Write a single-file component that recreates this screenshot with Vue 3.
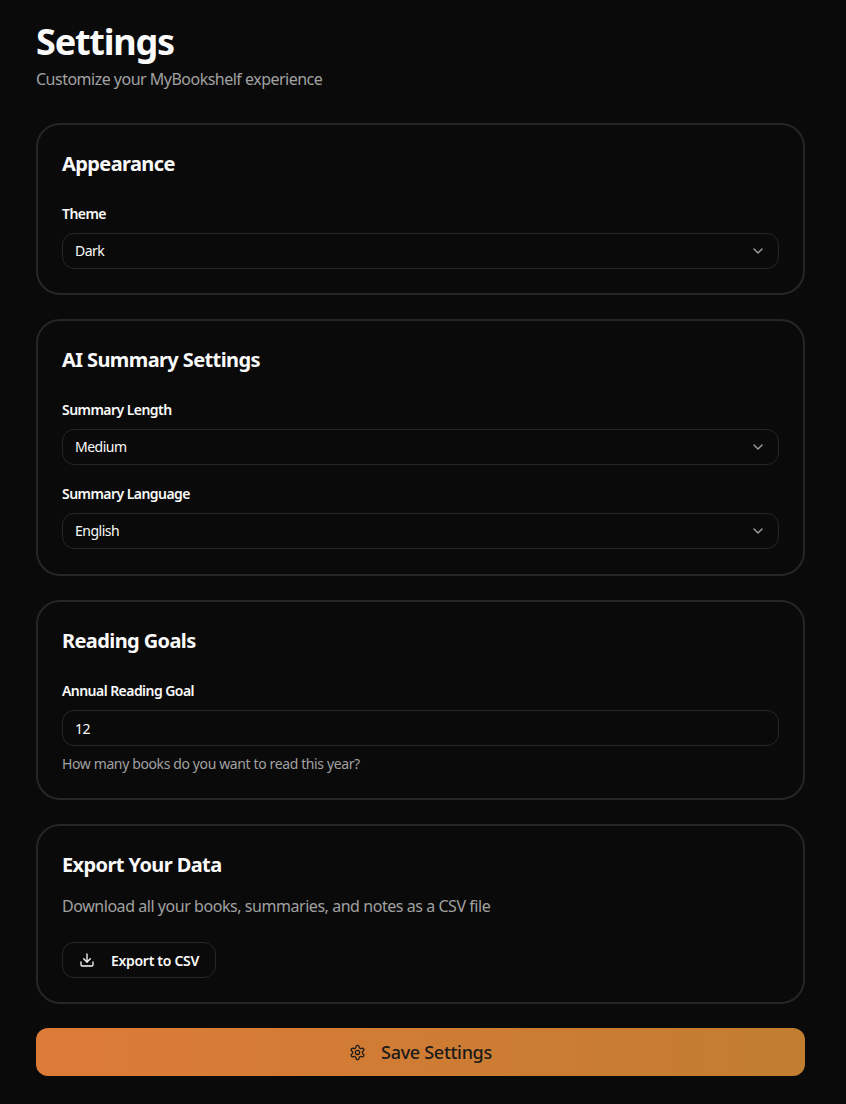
<script setup>
</script>

<template>
  <main class="page">
    <header class="head">
      <h1>Settings</h1>
      <p>Customize your MyBookshelf experience</p>
    </header>

    <section class="card">
      <h2>Appearance</h2>
      <div class="fields">
        <div class="field">
          <label>Theme</label>
          <div class="control select"><span>Dark</span>
            <svg class="chev" viewBox="0 0 24 24"><path d="m6 9 6 6 6-6" /></svg>
          </div>
        </div>
      </div>
    </section>

    <section class="card card-pair">
      <h2>AI Summary Settings</h2>
      <div class="fields">
        <div class="field">
          <label>Summary Length</label>
          <div class="control select"><span>Medium</span>
            <svg class="chev" viewBox="0 0 24 24"><path d="m6 9 6 6 6-6" /></svg>
          </div>
        </div>
        <div class="field">
          <label>Summary Language</label>
          <div class="control select"><span>English</span>
            <svg class="chev" viewBox="0 0 24 24"><path d="m6 9 6 6 6-6" /></svg>
          </div>
        </div>
      </div>
    </section>

    <section class="card">
      <h2>Reading Goals</h2>
      <div class="fields">
        <div class="field">
          <label>Annual Reading Goal</label>
          <div class="control"><span>12</span></div>
          <p class="hint">How many books do you want to read this year?</p>
        </div>
      </div>
    </section>

    <section class="card">
      <h2>Export Your Data</h2>
      <p class="desc">Download all your books, summaries, and notes as a CSV file</p>
      <button class="export">
        <svg viewBox="0 0 24 24"><path d="M12 15V3" /><path d="M21 15v4a2 2 0 0 1-2 2H5a2 2 0 0 1-2-2v-4" /><path d="m7 10 5 5 5-5" /></svg>
        <span>Export to CSV</span>
      </button>
    </section>

    <button class="save">
      <svg viewBox="0 0 24 24">
        <path d="M12.22 2h-.44a2 2 0 0 0-2 2v.18a2 2 0 0 1-1 1.73l-.43.25a2 2 0 0 1-2 0l-.15-.08a2 2 0 0 0-2.73.73l-.22.38a2 2 0 0 0 .73 2.73l.15.1a2 2 0 0 1 1 1.72v.51a2 2 0 0 1-1 1.74l-.15.09a2 2 0 0 0-.73 2.73l.22.38a2 2 0 0 0 2.73.73l.15-.08a2 2 0 0 1 2 0l.43.25a2 2 0 0 1 1 1.73V20a2 2 0 0 0 2 2h.44a2 2 0 0 0 2-2v-.18a2 2 0 0 1 1-1.73l.43-.25a2 2 0 0 1 2 0l.15.08a2 2 0 0 0 2.73-.73l.22-.39a2 2 0 0 0-.73-2.73l-.15-.08a2 2 0 0 1-1-1.74v-.5a2 2 0 0 1 1-1.74l.15-.09a2 2 0 0 0 .73-2.73l-.22-.38a2 2 0 0 0-2.73-.73l-.15.08a2 2 0 0 1-2 0l-.43-.25a2 2 0 0 1-1-1.73V4a2 2 0 0 0-2-2z" />
        <circle cx="12" cy="12" r="3" />
      </svg>
      <span>Save Settings</span>
    </button>
  </main>
</template>

<style>
html, body { margin: 0; background: #0a0a0a; }
</style>

<style scoped>
.page {
  box-sizing: border-box;
  width: 846px;
  height: 1104px;
  padding: 22px 41px 0 36px;
  background: #0a0a0a;
  font-family: "Noto Sans", "Open Sans", sans-serif;
  color: #fafafa;
  display: flex;
  flex-direction: column;
  gap: 24px;
  overflow: hidden;
}
.head { height: 77px; }
h1 {
  margin: 0;
  font-size: 36px;
  line-height: 40px;
  font-weight: 700;
  letter-spacing: -1.2px;
}
.head p {
  margin: 5px 0 0;
  font-size: 16px;
  line-height: 24px;
  color: #a1a1a1;
  letter-spacing: -0.51px;
}
.card {
  box-sizing: border-box;
  border: 2px solid #262626;
  border-radius: 24px;
  padding: 24px;
  background: #0a0a0a;
}
.card-pair { padding-bottom: 25px; }
h2 {
  margin: 0;
  font-size: 20px;
  line-height: 30px;
  font-weight: 700;
  letter-spacing: -0.6px;
}
.fields { margin-top: 24px; display: flex; flex-direction: column; gap: 18px; }
.field { display: flex; flex-direction: column; gap: 8px; }
label {
  font-size: 14px;
  line-height: 22px;
  font-weight: 600;
  letter-spacing: -0.55px;
}
.control {
  box-sizing: border-box;
  height: 36px;
  border: 1px solid #262626;
  border-radius: 12px;
  padding: 0 12px;
  display: flex;
  align-items: center;
  justify-content: space-between;
  font-size: 14px;
  letter-spacing: -0.5px;
}
.select span { padding-bottom: 2px; }
.chev {
  width: 16px;
  height: 16px;
  fill: none;
  stroke: #a1a1a1;
  stroke-width: 2;
  stroke-linecap: round;
  stroke-linejoin: round;
}
.hint {
  margin: 0;
  font-size: 14px;
  line-height: 20px;
  color: #a1a1a1;
  letter-spacing: -0.38px;
}
.desc {
  margin: 14px 0 0;
  font-size: 16px;
  line-height: 24px;
  color: #a1a1a1;
  letter-spacing: -0.45px;
}
.export {
  margin-top: 24px;
  box-sizing: border-box;
  height: 36px;
  padding: 0 16px;
  display: inline-flex;
  align-items: center;
  gap: 16px;
  background: #0a0a0a;
  border: 1px solid #262626;
  border-radius: 12px;
  color: #fafafa;
  font: inherit;
  font-size: 14px;
  font-weight: 600;
  letter-spacing: -0.3px;
}
.export svg {
  width: 16px;
  height: 16px;
  fill: none;
  stroke: #fafafa;
  stroke-width: 2;
  stroke-linecap: round;
  stroke-linejoin: round;
}
.save {
  height: 48px;
  flex: none;
  border: 0;
  border-radius: 12px;
  background: linear-gradient(90deg, #dd7b38, #c17d30);
  color: #1a1a1a;
  font: inherit;
  font-size: 18px;
  font-weight: 500;
  letter-spacing: -0.3px;
  display: flex;
  align-items: center;
  justify-content: center;
  gap: 15px;
}
.save svg {
  width: 17px;
  height: 17px;
  fill: none;
  stroke: #1a1a1a;
  stroke-width: 1.8;
  stroke-linecap: round;
  stroke-linejoin: round;
}
</style>
